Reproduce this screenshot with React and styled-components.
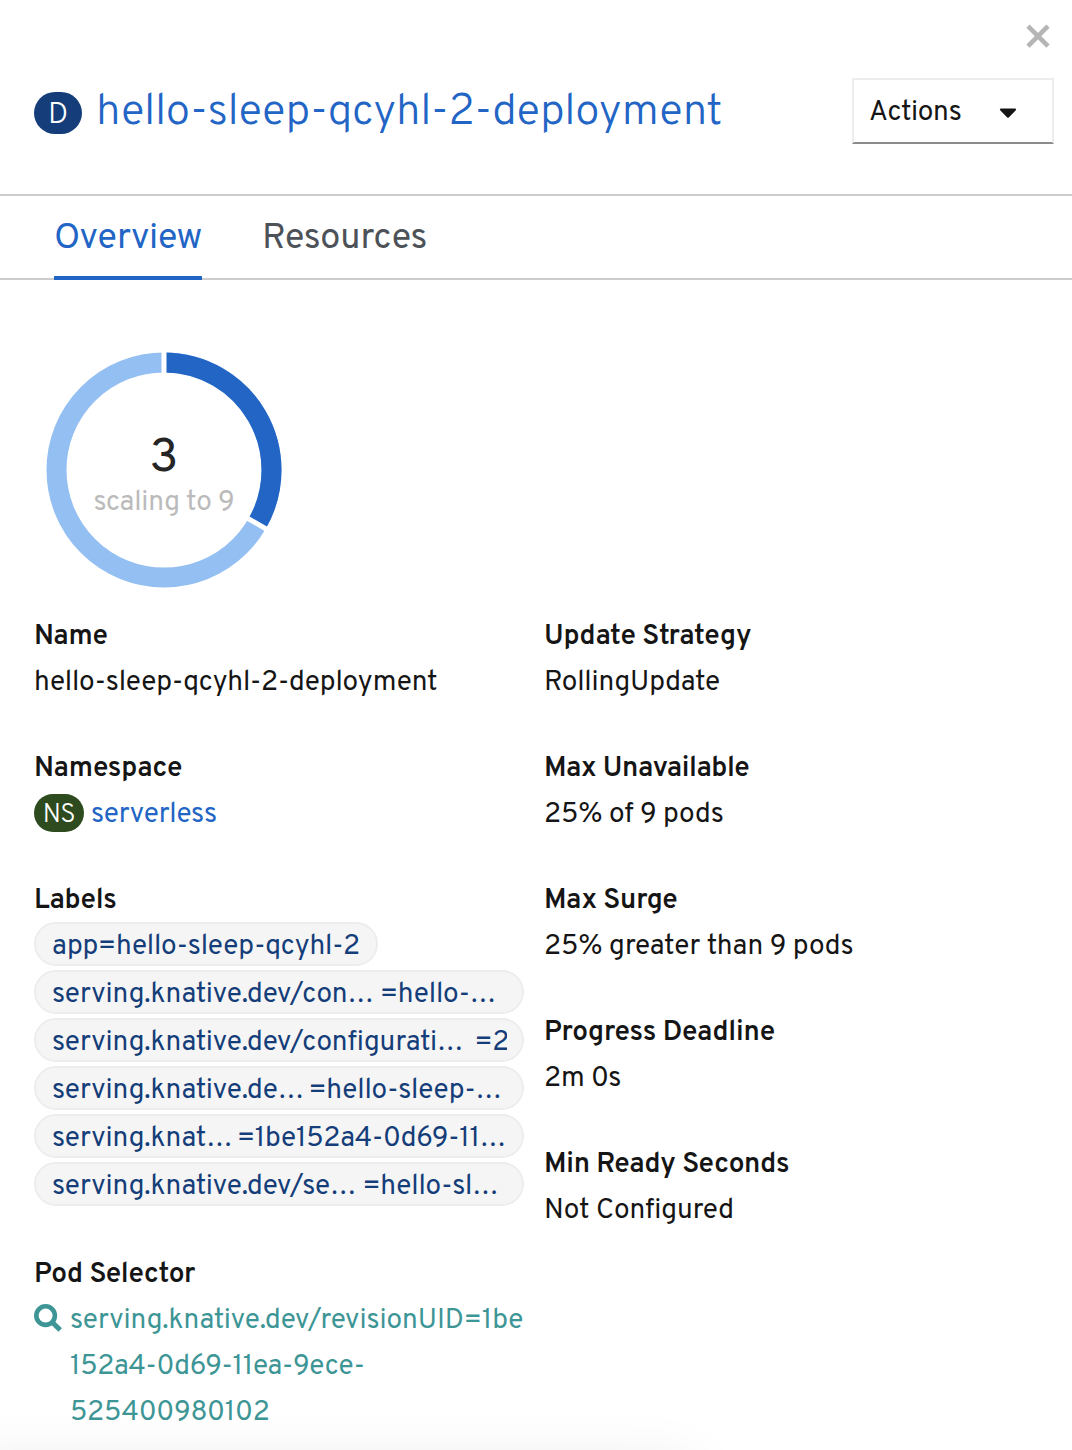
import React from 'react';
import styled, { createGlobalStyle } from 'styled-components';
import { FaCaretDown } from 'react-icons/fa';

const GlobalStyle = createGlobalStyle`
  *, *::before, *::after { box-sizing: border-box; }
  body {
    margin: 0;
    background: #fff;
    color: #151515;
    font-family: Overpass, Roboto, 'Open Sans', sans-serif;
    font-size: 28px;
    line-height: 46px;
    letter-spacing: -0.12px;
  }
`;

const Panel = styled.main`
  position: relative;
  width: 1072px;
  height: 1450px;
  overflow: hidden;
  background: #fff;
`;

const CloseRow = styled.div`
  display: flex;
  justify-content: flex-end;
  height: 78px;
  padding: 24px 22px 0 0;
`;

const CloseButton = styled.button`
  width: 24px;
  height: 24px;
  padding: 0;
  border: 0;
  background: none;
  line-height: 0;
`;

const Header = styled.header`
  display: flex;
  justify-content: space-between;
  align-items: flex-start;
  height: 118px;
  padding: 0 18px 0 34px;
  border-bottom: 2px solid #ccc;
`;

const Heading = styled.div`
  display: flex;
  align-items: flex-start;
`;

const KindBadge = styled.span`
  display: flex;
  align-items: center;
  justify-content: center;
  flex: none;
  width: 48px;
  height: 42px;
  margin: 14px 14px 0 0;
  padding-top: 6px;
  border-radius: 21px;
  background: #143d79;
  color: #fff;
  font-size: 30px;
  font-weight: 300;
  line-height: 42px;
`;

const Title = styled.h1`
  margin: 0;
  color: #2265c5;
  font-size: 44px;
  font-weight: 300;
  line-height: 70px;
  letter-spacing: -0.34px;
  white-space: nowrap;
`;

const ActionsButton = styled.button`
  display: flex;
  align-items: flex-start;
  justify-content: space-between;
  width: 202px;
  height: 66px;
  padding: 10px 30px 0 15px;
  border: 2px solid #ededed;
  border-bottom-color: #8a8b8c;
  background: #fff;
  color: #151515;
  font: inherit;
  letter-spacing: -0.2px;

  svg { margin-top: 8px; }
`;

const Tabs = styled.nav`
  display: flex;
  gap: 60px;
  height: 84px;
  padding-left: 54px;
  border-bottom: 2px solid #ccc;
`;

const Tab = styled.a`
  height: 84px;
  border-bottom: ${(p) => (p.$active ? '4px solid #2265c5' : '0')};
  color: ${(p) => (p.$active ? '#2265c5' : '#4d5258')};
  font-size: 36px;
  line-height: 86px;
  letter-spacing: ${(p) => (p.$active ? '-0.32px' : '-0.12px')};
`;

const Content = styled.section`
  padding: 70px 34px 0;
`;

const PodRing = styled.div`
  display: grid;
  width: 260px;
  height: 260px;

  > * { grid-area: 1 / 1; }
`;

const RingLabel = styled.div`
  display: flex;
  flex-direction: column;
  align-items: center;
  padding-top: 82px;
`;

const RingCount = styled.span`
  color: #252525;
  font-size: 48px;
  line-height: 54px;
`;

const RingCaption = styled.span`
  color: #bbb;
  line-height: 34px;
  letter-spacing: -0.2px;
`;

const Columns = styled.div`
  display: grid;
  grid-template-columns: 490px 490px;
  column-gap: 20px;
  padding-top: 4px;
`;

const Details = styled.dl`
  display: flex;
  flex-direction: column;
  gap: 40px;
  margin: 0;
`;

const Term = styled.dt`
  font-weight: 600;
  letter-spacing: ${(p) => p.$tracking || '-0.27px'};
`;

const Value = styled.dd`
  margin: 0;
  white-space: nowrap;
  letter-spacing: ${(p) => p.$tracking || '-0.12px'};
`;

const NamespaceRow = styled.div`
  display: flex;
  align-items: flex-start;
  gap: 7px;
  height: 46px;
`;

const NamespaceBadge = styled.span`
  display: flex;
  justify-content: center;
  width: 50px;
  height: 38px;
  margin-top: 2px;
  border-radius: 19px;
  background: #2d4b1e;
  color: #fff;
  font-size: 26px;
  font-weight: 300;
  line-height: 44px;
  letter-spacing: -0.6px;
`;

const ResourceLink = styled.a`
  color: #2265c5;
  letter-spacing: -0.22px;
`;

const LabelList = styled.div`
  display: flex;
  flex-direction: column;
  align-items: flex-start;
  gap: 4px;
  margin-top: -2px;
  padding-bottom: 6px;
`;

const LabelChip = styled.a`
  display: flex;
  width: ${(p) => (p.$full ? '490px' : '344px')};
  height: 44px;
  padding: 0 15.5px 0 16px;
  border: 2px solid #ededed;
  border-radius: 22px;
  background: #f5f5f5;
  color: #143d79;
  line-height: 46px;
`;

const ChipText = styled.span`
  display: flex;
  min-width: 0;
  overflow-x: clip;
  overflow-y: visible;
`;

const ChipKey = styled.span`
  flex: none;
  width: ${(p) => p.$width};
  letter-spacing: ${(p) => (p.$width === 'auto' ? '-0.18px' : '-0.05px')};
`;

const ChipValue = styled.span`
  letter-spacing: -0.19px;
`;

const SelectorLink = styled.a`
  display: flex;
  gap: 8px;
  color: #3d9596;

  svg { flex: none; margin-top: 6px; }
`;

const SelectorLine = styled.span`
  display: block;
  letter-spacing: ${(p) => p.$tracking};
`;

const labels = [
  { name: 'app', value: '=hello-sleep-qcyhl-2', width: 'auto' },
  { name: 'serving.knative.dev/con…', value: '=hello-…', width: '328px' },
  { name: 'serving.knative.dev/configurati…', value: '=2', width: '422.5px' },
  { name: 'serving.knative.de…', value: '=hello-sleep-…', width: '256.5px' },
  { name: 'serving.knat…', value: '=1be152a4-0d69-11…', width: '185px' },
  { name: 'serving.knative.dev/se…', value: '=hello-sl…', width: '310.5px' },
];

const strategy = [
  { term: 'Update Strategy', value: 'RollingUpdate', termTracking: '-0.22px', valueTracking: '-0.18px' },
  { term: 'Max Unavailable', value: '25% of 9 pods', termTracking: '-0.42px' },
  { term: 'Max Surge', value: '25% greater than 9 pods', valueTracking: '-0.1px' },
  { term: 'Progress Deadline', value: '2m 0s', termTracking: '-0.18px' },
  { term: 'Min Ready Seconds', value: 'Not Configured' },
];

const FooterShadow = styled.div`
  position: absolute;
  left: -60px;
  top: 1468px;
  width: 750px;
  height: 60px;
  box-shadow: 0 0 60px rgba(0, 0, 0, 0.1);
`;

function Ring() {
  return (
    <svg width="260" height="260" viewBox="0 0 260 260" fill="none">
      <circle cx="130" cy="120" r="107.5" stroke="#94bff2" strokeWidth="20" />
      <path d="M130 12.5A107.5 107.5 0 0 1 223.1 173.75" stroke="#2265c5" strokeWidth="20" />
      <path d="M130 120V0M130 120L233.9 180" stroke="#fff" strokeWidth="5" />
    </svg>
  );
}

function SearchIcon() {
  return (
    <svg width="28" height="28" viewBox="0 0 28 28" fill="none" stroke="currentColor">
      <circle cx="11.6" cy="11.6" r="9.3" strokeWidth="4.6" />
      <path d="M18.2 18.2L26.2 26" strokeWidth="5" />
    </svg>
  );
}

function Detail({ term, termTracking, valueTracking, children }) {
  return (
    <div>
      <Term $tracking={termTracking}>{term}</Term>
      <Value $tracking={valueTracking}>{children}</Value>
    </div>
  );
}

export default function App() {
  return (
    <Panel>
      <GlobalStyle />
      <CloseRow>
        <CloseButton aria-label="Close">
          <svg width="24" height="24" viewBox="0 0 24 24" stroke="#b5b5b5" strokeWidth="4.6">
            <path d="M2 2.2L22 22.2M22 2.2L2 22.2" />
          </svg>
        </CloseButton>
      </CloseRow>
      <Header>
        <Heading>
          <KindBadge>D</KindBadge>
          <Title>hello-sleep-qcyhl-2-deployment</Title>
        </Heading>
        <ActionsButton>
          Actions
          <FaCaretDown size={28} />
        </ActionsButton>
      </Header>
      <Tabs>
        <Tab $active>Overview</Tab>
        <Tab>Resources</Tab>
      </Tabs>
      <Content>
        <PodRing>
          <Ring />
          <RingLabel>
            <RingCount>3</RingCount>
            <RingCaption>scaling to 9</RingCaption>
          </RingLabel>
        </PodRing>
        <Columns>
          <Details>
            <Detail term="Name" termTracking="-0.4px" valueTracking="-0.2px">hello-sleep-qcyhl-2-deployment</Detail>
            <Detail term="Namespace">
              <NamespaceRow>
                <NamespaceBadge>NS</NamespaceBadge>
                <ResourceLink>serverless</ResourceLink>
              </NamespaceRow>
            </Detail>
            <Detail term="Labels">
              <LabelList>
                {labels.map((l) => (
                  <LabelChip key={l.name} $full={l.width !== 'auto'}>
                    <ChipText>
                      <ChipKey $width={l.width}>{l.name}</ChipKey>
                      <ChipValue>{l.value}</ChipValue>
                    </ChipText>
                  </LabelChip>
                ))}
              </LabelList>
            </Detail>
            <Detail term="Pod Selector">
              <SelectorLink>
                <SearchIcon />
                <span>
                  <SelectorLine $tracking="-0.05px">serving.knative.dev/revisionUID=1be</SelectorLine>
                  <SelectorLine $tracking="-0.27px">152a4-0d69-11ea-9ece-</SelectorLine>
                  <SelectorLine $tracking="-0.24px">525400980102</SelectorLine>
                </span>
              </SelectorLink>
            </Detail>
          </Details>
          <Details>
            {strategy.map(({ value, ...rest }) => (
              <Detail key={rest.term} {...rest}>{value}</Detail>
            ))}
          </Details>
        </Columns>
      </Content>
      <FooterShadow />
    </Panel>
  );
}
